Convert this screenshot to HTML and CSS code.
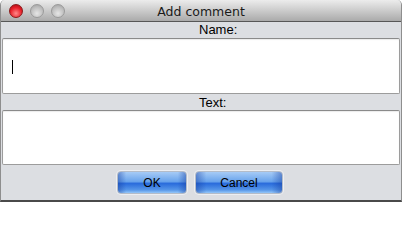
FILE: index.html
```html
<!DOCTYPE html>
<html>
<head>
<meta charset="utf-8">
<title>Add comment</title>
<link rel="stylesheet" href="styles.css">
</head>
<body>
<div class="window">
  <div class="titlebar">
    <div class="lights">
      <span class="light close"></span>
      <span class="light"></span>
      <span class="light"></span>
    </div>
    <div class="title">Add comment</div>
  </div>
  <div class="content">
    <div class="label">Name:</div>
    <div class="field field-name"><span class="caret"></span></div>
    <div class="label label-text">Text:</div>
    <div class="field field-text"></div>
    <div class="buttons">
      <button class="btn btn-ok">OK</button>
      <button class="btn btn-cancel">Cancel</button>
    </div>
  </div>
</div>
</body>
</html>
```

FILE: styles.css
```css
html, body {
  margin: 0;
  padding: 0;
  background: #ffffff;
}
.window {
  width: 402px;
  height: 202px;
  box-sizing: border-box;
  display: flex;
  flex-direction: column;
  background: #dcdee2;
  border-left: 1px solid #8e8e8e;
  border-right: 1px solid #8e8e8e;
  border-bottom: 2px solid #4a4a4a;
  border-radius: 5px 5px 0 0;
  overflow: hidden;
  font-family: "Liberation Sans", Arial, sans-serif;
}
.titlebar {
  position: relative;
  height: 22px;
  flex: none;
  box-sizing: border-box;
  background: linear-gradient(#ececec, #d2d2d2 40%, #aaaaaa);
  border-bottom: 1px solid #575757;
  display: flex;
  align-items: center;
  justify-content: center;
}
.lights {
  position: absolute;
  left: 8px;
  top: 4px;
  display: flex;
  gap: 7px;
}
.light {
  width: 14px;
  height: 14px;
  border-radius: 50%;
  box-sizing: border-box;
  background: radial-gradient(circle at 50% 70%, #e6e6e6, #bdbdbd 60%, #9c9c9c);
  border: 1px solid #9a9a9a;
}
.light.close {
  background: radial-gradient(circle at 50% 70%, #ff8a8a, #e8202a 55%, #a10a10);
  border-color: #8a1a1a;
}
.title {
  font-family: "DejaVu Sans", "Liberation Sans", sans-serif;
  font-size: 12.5px;
  color: #1a1a1a;
  margin-top: 1px;
}
.content {
  flex: 1;
  display: flex;
  flex-direction: column;
  padding: 0 1px 0 1px;
}
.label {
  height: 16px;
  line-height: 16px;
  padding-left: 197px;
  font-size: 13px;
  color: #000;
}
.label-text {
  height: 16px;
  line-height: 17px;
}
.field {
  background: #ffffff;
  border: 1px solid #9c9c9c;
  border-top-color: #8a8a8a;
  border-radius: 2px;
  box-sizing: border-box;
  box-shadow: inset 0 1px 1px rgba(0,0,0,0.08);
  position: relative;
}
.field-name {
  height: 56px;
  display: flex;
  align-items: center;
  padding-left: 9px;
}
.caret {
  width: 1px;
  height: 14px;
  background: #000;
  margin-top: 1px;
}
.field-text {
  height: 55px;
}
.buttons {
  display: flex;
  justify-content: center;
  gap: 8px;
  margin-top: 6px;
  padding-right: 2px;
}
.btn {
  height: 23px;
  box-sizing: border-box;
  border: 1px solid #b4bcc8;
  border-radius: 4px;
  background:
    linear-gradient(90deg, rgba(20,60,160,0.45), rgba(0,0,0,0) 12%, rgba(0,0,0,0) 88%, rgba(20,60,160,0.45)),
    linear-gradient(#a6cbf6, #6aa4ec 45%, #2a6cdc 55%, #5696e8 85%, #94c6f8);
  font-family: "Liberation Sans", Arial, sans-serif;
  font-size: 12px;
  color: #000;
  padding: 0;
  box-shadow: 0 0 0 1px #eceef2;
}
.btn-ok {
  width: 70px;
}
.btn-cancel {
  width: 88px;
}
```
